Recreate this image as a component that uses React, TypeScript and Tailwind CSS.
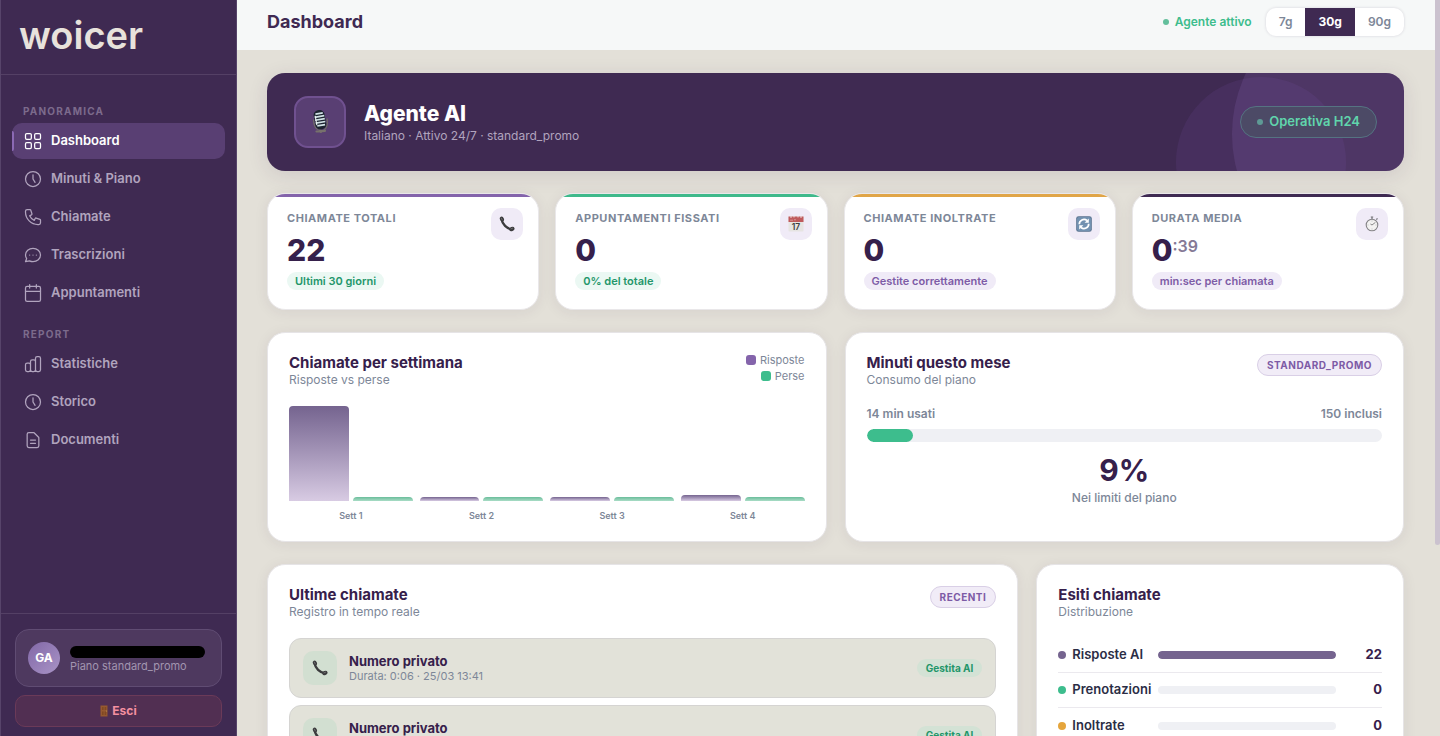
import React, { useState } from 'react';
import clsx from 'clsx';

const iconPaths: Record<string, React.ReactNode> = {
  grid: (
    <>
      <rect x="3" y="3" width="7" height="7" rx="1.5" />
      <rect x="14" y="3" width="7" height="7" rx="1.5" />
      <rect x="3" y="14" width="7" height="7" rx="1.5" />
      <rect x="14" y="14" width="7" height="7" rx="1.5" />
    </>
  ),
  clock: (
    <>
      <circle cx="12" cy="12" r="9" />
      <path d="M12 7v5l2.5 4" />
    </>
  ),
  phone: (
    <path d="M3 5a2 2 0 012-2h3.28a1 1 0 01.948.684l1.498 4.493a1 1 0 01-.502 1.21l-2.257 1.13a11.042 11.042 0 005.516 5.516l1.13-2.257a1 1 0 011.21-.502l4.493 1.498a1 1 0 01.684.949V19a2 2 0 01-2 2h-1C9.716 21 3 14.284 3 6V5z" />
  ),
  chat: (
    <path d="M8 12h.01M12 12h.01M16 12h.01M21 12c0 4.418-4.03 8-9 8a9.863 9.863 0 01-4.255-.949L3 20l1.395-3.72C3.512 15.042 3 13.574 3 12c0-4.418 4.03-8 9-8s9 3.582 9 8z" />
  ),
  calendar: (
    <>
      <rect x="3" y="4" width="18" height="18" rx="2" />
      <path d="M16 2v4M8 2v4M3 10h18" />
    </>
  ),
  chart: (
    <path d="M9 19v-6a2 2 0 00-2-2H5a2 2 0 00-2 2v6a2 2 0 002 2h2a2 2 0 002-2zm0 0V9a2 2 0 012-2h2a2 2 0 012 2v10m-6 0a2 2 0 002 2h2a2 2 0 002-2m0 0V5a2 2 0 012-2h2a2 2 0 012 2v14a2 2 0 01-2 2h-2a2 2 0 01-2-2z" />
  ),
  doc: (
    <path d="M9 12h6m-6 4h6m2 5H7a2 2 0 01-2-2V5a2 2 0 012-2h5.586a1 1 0 01.707.293l5.414 5.414a1 1 0 01.293.707V19a2 2 0 01-2 2z" />
  ),
};

const NavIcon = ({ name }: { name: string }) => (
  <svg viewBox="0 0 24 24" className="size-5 shrink-0" fill="none" stroke="currentColor" strokeWidth="1.5" strokeLinecap="round" strokeLinejoin="round">
    {iconPaths[name]}
  </svg>
);

const Receiver = () => (
  <svg viewBox="0 0 16 16" className="size-4">
    <path d="M2.6 3.4C3.4 8.4 7.6 12.6 13 13.4" fill="none" stroke="#3c3c3e" strokeWidth="2.4" />
    <ellipse cx="2.9" cy="3" rx="2" ry="2.5" fill="#3c3c3e" transform="rotate(-25 2.9 3)" />
    <ellipse cx="12.9" cy="13" rx="2.7" ry="2" fill="#3c3c3e" transform="rotate(-20 12.9 13)" />
    <path d="M2.4 2.2l.8 1.6M12 12.8l1.6-.6" stroke="#7b7b7d" strokeWidth=".8" strokeLinecap="round" />
  </svg>
);

const CalendarEmoji = () => (
  <svg viewBox="0 0 16 16" className="size-4">
    <rect x=".5" y=".5" width="15" height="15" rx=".8" fill="#e6e4e2" />
    <path d="M.5.5h15V6H.5z" fill="#bf5a5c" />
    <path d="M3 0v2M6 0v1.5M10 0v1.5M13 0v2" stroke="#f0e6e6" strokeWidth=".9" />
    <path d="M2 4.2h3M6 3.8h2" stroke="#dba3a4" strokeWidth=".8" />
    <text x="8" y="13.8" textAnchor="middle" fontSize="8.5" fontWeight="600" fontFamily="Inter, sans-serif" fill="#3c3c3e">17</text>
  </svg>
);

const RefreshEmoji = () => (
  <svg viewBox="0 0 16 16" className="size-4">
    <rect x=".2" y=".2" width="15.6" height="15.6" rx="2.4" fill="#58728f" />
    <rect x="1" y="1" width="14" height="14" rx="2" fill="#7291b0" />
    <path d="M3.3 8.3A4.7 4.7 0 0111 4.5M12.7 7.7A4.7 4.7 0 015 11.5" fill="none" stroke="#fff" strokeWidth="1.7" />
    <path d="M12.8 2.6v4.2H8.6zM3.2 13.4V9.2h4.2z" fill="#fff" />
  </svg>
);

const StopwatchEmoji = () => (
  <svg viewBox="0 0 16 16" className="size-4">
    <path d="M8 .8v2.4M6.8 1h2.4M12.2 3.4l1.4-1" stroke="#77777a" strokeWidth="1.2" />
    <circle cx="8" cy="9" r="5.8" fill="#f3f2f1" stroke="#858487" strokeWidth="1.1" />
    <path d="M8 9l3.4-2.6M8 9L6.4 8" stroke="#6b6b6d" strokeWidth=".8" />
    <path d="M8 4.5v1M8 12.5v1M3.5 9h1M11.5 9h1" stroke="#a5a4a7" strokeWidth=".6" />
  </svg>
);

const MicEmoji = () => (
  <svg viewBox="0 0 24 24" className="size-6">
    <path d="M5.5 9.5c.2 5.5 1.5 9 5 10.5M19 8.5c1.3 5-.2 10-3.5 12" fill="none" stroke="#6e6a68" strokeWidth="1.3" />
    <path d="M8.5 21.500l8.500-.6M12 18l1 4" stroke="#77716c" strokeWidth="2.2" strokeLinecap="round" />
    <g transform="rotate(-10 12 10)">
      <rect x="6.500" y="0" width="11" height="19.500" rx="5" fill="#1c2330" />
      <path d="M8.500 3.400h7.500M7.200 6.400h9.800M7.200 9.400h9.800M7.200 12.400h9.800M8.300 15.400h7.900" stroke="#cfe0e4" strokeWidth="1.700" />
      <path d="M8 5v9.500" stroke="#eef4f4" strokeWidth="1.1" />
    </g>
  </svg>
);

const DoorEmoji = () => (
  <svg viewBox="0 0 8 12" className="h-3 w-2">
    <rect x=".5" y=".5" width="7" height="11" fill="#96592f" />
    <path d="M2 2h1.600v3H2zM4.600 2h1.600v3H4.600zM2 6.500h1.600v3.500H2zM4.600 6.500h1.600v3.500H4.600z" fill="#804823" />
    <circle cx="6.6" cy="6" r=".5" fill="#c9a05c" />
  </svg>
);

const sections = [
  {
    title: 'PANORAMICA',
    items: [
      { label: 'Dashboard', icon: 'grid' },
      { label: 'Minuti & Piano', icon: 'clock' },
      { label: 'Chiamate', icon: 'phone' },
      { label: 'Trascrizioni', icon: 'chat' },
      { label: 'Appuntamenti', icon: 'calendar' },
    ],
  },
  {
    title: 'REPORT',
    items: [
      { label: 'Statistiche', icon: 'chart' },
      { label: 'Storico', icon: 'clock' },
      { label: 'Documenti', icon: 'doc' },
    ],
  },
];

const kpis = [
  { label: 'CHIAMATE TOTALI', value: '22', note: 'Ultimi 30 giorni', stripe: 'bg-[#8464ab]', green: true, icon: <Receiver /> },
  { label: 'APPUNTAMENTI FISSATI', value: '0', note: '0% del totale', stripe: 'bg-[#3fb98b]', green: true, icon: <CalendarEmoji /> },
  { label: 'CHIAMATE INOLTRATE', value: '0', note: 'Gestite correttamente', stripe: 'bg-[#e0a548]', green: false, icon: <RefreshEmoji /> },
  { label: 'DURATA MEDIA', value: '0', suffix: ':39', note: 'min:sec per chiamata', stripe: 'bg-[#3f2a52]', green: false, icon: <StopwatchEmoji /> },
];

const weeks = [
  { label: 'Sett 1', answered: 100, missed: 4 },
  { label: 'Sett 2', answered: 4, missed: 4 },
  { label: 'Sett 3', answered: 4, missed: 4 },
  { label: 'Sett 4', answered: 6, missed: 4 },
];

const outcomes = [
  { label: 'Risposte AI', value: 22, dot: 'bg-[#75648f]' },
  { label: 'Prenotazioni', value: 0, dot: 'bg-[#3dbd8d]' },
  { label: 'Inoltrate', value: 0, dot: 'bg-[#e5a53c]' },
];

const calls = ['Durata: 0:06 · 25/03 13:41', ''];

const Card = ({ children }: { children: React.ReactNode }) => (
  <section className="rounded-[18px] border border-[#e6e4e6] bg-white px-[21px] pt-[21px] pb-[18px] shadow-[0_2px_14px_rgba(63,42,82,0.08)]">{children}</section>
);

const CardHead = ({ title, sub, children }: { title: string; sub: string; children?: React.ReactNode }) => (
  <div className="mb-4 flex h-9 items-start justify-between">
    <div>
      <h2 className="text-[15px] leading-[18px] font-bold text-[#36204b]">{title}</h2>
      <p className="text-xs leading-4 text-[#7d8798]">{sub}</p>
    </div>
    {children}
  </div>
);

const Tag = ({ children }: { children: React.ReactNode }) => (
  <span className="rounded-full border border-[#d9cfe6] bg-[#f1ecf7] px-[9px] py-[2px] text-[10px] leading-4 font-bold tracking-wider text-[#7d5ba6]">{children}</span>
);

function Sidebar() {
  return (
    <aside className="flex w-[237px] shrink-0 flex-col border-x border-[#57446a] bg-[#3f2a52]">
      <a href="#" className="flex h-[75px] items-center border-b border-[#544065] px-[18px] pb-1 text-[38px] leading-none font-semibold text-[#e8e2dc]">
        woicer
      </a>
      <nav className="flex-1 px-[11px] pt-[13px]">
        {sections.map((section) => (
          <div key={section.title}>
            <div className="px-[11px] pt-[15px] pb-1 text-[10px] leading-4 font-bold tracking-[0.12em] text-[#7c6b8c]">{section.title}</div>
            <ul className="flex flex-col gap-0.5">
              {section.items.map((item) => (
                <li key={item.label}>
                  <a
                    href="#"
                    className={clsx(
                      'relative flex h-9 items-center gap-2 rounded-[10px] px-[11px] text-[13px] font-semibold',
                      item.label === 'Dashboard' ? 'bg-[#593f73] text-white' : 'text-[#b1a4be]'
                    )}
                  >
                    {item.label === 'Dashboard' && <span className="absolute inset-y-2 left-0 w-[2px] rounded-r bg-[#8b69b4]" />}
                    <NavIcon name={item.icon} />
                    {item.label}
                  </a>
                </li>
              ))}
            </ul>
          </div>
        ))}
      </nav>
      <div className="border-t border-[#544065] px-[14px] pt-[15px] pb-[9px]">
        <div className="flex items-center gap-[10px] rounded-[14px] border border-[#604c73] bg-[#4e395f] p-3">
          <div className="flex size-8 shrink-0 items-center justify-center rounded-full bg-linear-to-br from-[#8268a7] to-[#a994c6] text-xs font-bold text-white">GA</div>
          <div className="min-w-0 flex-1 pt-1 pr-1">
            <div className="h-3 rounded-full bg-black" />
            <div className="text-[11px] leading-4 text-[#a295af]">Piano standard_promo</div>
          </div>
        </div>
        <button type="button" className="mt-2 flex h-8 w-full items-center justify-center gap-1 rounded-[10px] border border-[#6b3a58] bg-[#512f52] text-xs font-bold text-[#f490a0]">
          <DoorEmoji />
          Esci
        </button>
      </div>
    </aside>
  );
}

export default function App() {
  const [period, setPeriod] = useState('30g');

  return (
    <div className="flex h-screen bg-[#e3e0d8] font-['Inter',sans-serif]">
      <Sidebar />
      <div className="min-w-0 flex-1 overflow-y-auto pr-[5px] [scrollbar-width:none]">
        <header className="flex items-start justify-between bg-[#f6f8f8] pt-2 pr-[31px] pb-[14px] pl-[30px]">
          <h1 className="text-lg leading-7 font-bold text-[#3f2a52]">Dashboard</h1>
          <div className="flex items-center gap-[14px]">
            <span className="flex items-center gap-[6px] text-xs font-semibold text-[#3dbd8d]">
              <span className="size-[6px] rounded-full bg-[#63bf9c]" />
              Agente attivo
            </span>
            <div className="flex h-7 overflow-hidden rounded-[10px] bg-white shadow-[0_0_3px_rgba(63,42,82,0.18)]">
              {['7g', '30g', '90g'].map((p) => (
                <button
                  key={p}
                  type="button"
                  onClick={() => setPeriod(p)}
                  className={clsx('px-[13px] text-xs', period === p ? 'bg-[#3f2a52] font-bold text-white' : 'font-semibold text-[#7d8798]')}
                >
                  {p}
                </button>
              ))}
            </div>
          </div>
        </header>

        <main className="flex flex-col gap-[22px] pt-[23px] pr-[31px] pb-[30px] pl-[30px]">
          <section className="relative flex items-center gap-[18px] overflow-hidden rounded-[18px] bg-[#3f2a52] px-[27px] py-[23px] shadow-[0_4px_20px_rgba(63,42,82,0.12)]">
            <span className="absolute top-1 right-[58px] size-[170px] rounded-full bg-[#7a4fa8]/15" />
            <span className="absolute -top-[79px] -right-[108px] size-[280px] rounded-full bg-[#8b69b4]/20" />
            <div className="flex size-[52px] items-center justify-center rounded-[14px] border-2 border-[#705190] bg-[#593f73]">
              <MicEmoji />
            </div>
            <div className="flex-1 pt-[2px]">
              <h2 className="text-[21px] leading-[26px] font-extrabold text-white">Agente AI</h2>
              <p className="text-xs leading-[18px] text-[#b1a4be]">Italiano · Attivo 24/7 · standard_promo</p>
            </div>
            <span className="relative flex h-8 items-center gap-[6px] rounded-full border border-[#557382] bg-[#4c4a66] px-4 text-[13px] font-semibold text-[#60d5ac]">
              <span className="size-[6px] rounded-full bg-[#5e9a95]" />
              Operativa H24
            </span>
          </section>

          <div className="grid grid-cols-4 gap-4">
            {kpis.map((k) => (
              <section key={k.label} className="relative flex items-start justify-between overflow-hidden rounded-[18px] border border-[#e9e7e9] bg-white pt-[14px] pr-[15px] pb-[18px] pl-[19px] shadow-[0_2px_14px_rgba(63,42,82,0.08)]">
                <span className={clsx('absolute inset-x-0 top-0 h-[3px]', k.stripe)} />
                <div className="pt-[2px]">
                  <h3 className="text-[11px] leading-4 font-bold tracking-wider text-[#7d8798]">{k.label}</h3>
                  <div className="mt-2 flex items-start text-3xl leading-8 font-extrabold text-[#36204b]">
                    {k.value}
                    {k.suffix && <span className="text-base leading-6 font-semibold text-[#857a96]">{k.suffix}</span>}
                  </div>
                  <span
                    className={clsx(
                      'mt-[6px] inline-block rounded-full px-2 text-[11px] leading-[18px] font-semibold',
                      k.green ? 'bg-[#ebf8f3] text-[#23966a]' : 'bg-[#f0ebf7] text-[#7d5ba6]'
                    )}
                  >
                    {k.note}
                  </span>
                </div>
                <div className="flex size-8 items-center justify-center rounded-[10px] bg-[#f0ebf7]">{k.icon}</div>
              </section>
            ))}
          </div>

          <div className="grid grid-cols-2 gap-[18px]">
            <Card>
              <CardHead title="Chiamate per settimana" sub="Risposte vs perse">
                <div className="-mt-0.5 flex flex-col items-end text-[11px] leading-4 text-[#7d8798]">
                  <span className="flex items-center gap-1">
                    <span className="size-[10px] rounded-[3px] bg-[#8464ab]" />
                    Risposte
                  </span>
                  <span className="flex items-center gap-1">
                    <span className="size-[10px] rounded-[3px] bg-[#3dbd8d]" />
                    Perse
                  </span>
                </div>
              </CardHead>
              <div className="flex gap-[7px]">
                {weeks.map((w) => (
                  <div key={w.label} className="flex-1">
                    <div className="flex h-[95px] items-end gap-1">
                      <div className="flex-1 rounded-t-[4px] bg-linear-to-b from-[#75648f] to-[#d8cbe3]" style={{ height: `${w.answered}%` }} />
                      <div className="flex-1 rounded-t-[4px] bg-linear-to-b from-[#69bd9b] to-[#a9dcc6]" style={{ height: `${w.missed}%` }} />
                    </div>
                    <div className="mt-2 text-center text-[9px] leading-[14px] font-semibold text-[#7d8798]">{w.label}</div>
                  </div>
                ))}
              </div>
            </Card>

            <Card>
              <CardHead title="Minuti questo mese" sub="Consumo del piano">
                <Tag>STANDARD_PROMO</Tag>
              </CardHead>
              <div className="flex justify-between text-xs leading-4 font-semibold text-[#7d8798]">
                <span>14 min usati</span>
                <span>150 inclusi</span>
              </div>
              <div className="mt-[7px] h-[13px] overflow-hidden rounded-full bg-[#eff0f4]">
                <div className="h-full rounded-full bg-[#3dbd8d]" style={{ width: '9%' }} />
              </div>
              <div className="mt-3 text-center">
                <div className="text-3xl leading-8 font-bold text-[#36204b]">9%</div>
                <div className="mt-1 text-xs leading-4 font-medium text-[#7d8798]">Nei limiti del piano</div>
              </div>
            </Card>
          </div>

          <div className="grid grid-cols-[47fr_23fr] gap-[18px]">
            <Card>
              <CardHead title="Ultime chiamate" sub="Registro in tempo reale">
                <Tag>RECENTI</Tag>
              </CardHead>
              <ul className="flex flex-col gap-[7px]">
                {calls.map((info, idx) => (
                  <li key={idx} className="flex h-[60px] items-center gap-3 rounded-xl border border-[#d5d4d2] bg-[#e2e2d9] px-[13px]">
                    <div className="flex size-[34px] items-center justify-center rounded-[10px] bg-[#d2dfd1]">
                      <Receiver />
                    </div>
                    <div className="flex-1">
                      <h4 className="text-[13px] leading-4 font-bold text-[#36204b]">Numero privato</h4>
                      <p className="h-[14px] text-[11px] leading-[14px] text-[#7d8798]">{info}</p>
                    </div>
                    <span className="rounded-full bg-[#d3e2d5] px-[9px] text-[10px] leading-[18px] font-bold text-[#23966a]">Gestita AI</span>
                  </li>
                ))}
              </ul>
            </Card>

            <Card>
              <CardHead title="Esiti chiamate" sub="Distribuzione" />
              <ul className="divide-y divide-[#ebe9ee]">
                {outcomes.map((o) => (
                  <li key={o.label} className="flex h-[35px] items-center text-[13px] font-semibold text-[#2b2d45]">
                    <span className={clsx('size-2 shrink-0 rounded-full', o.dot)} />
                    <span className="ml-[6px] w-20 shrink-0">{o.label}</span>
                    <span className="ml-[6px] h-2 flex-1 overflow-hidden rounded-full bg-[#eff0f4]">
                      <span className={clsx('block h-full rounded-full', o.dot)} style={{ width: `${(o.value / 22) * 100}%` }} />
                    </span>
                    <span className="w-[46px] text-right font-bold text-[#36204b]">{o.value}</span>
                  </li>
                ))}
              </ul>
            </Card>
          </div>
        </main>
      </div>
      <div className="fixed top-0 right-0 h-[74%] w-[5px] rounded-b bg-[#cbc2cf]" />
    </div>
  );
}
